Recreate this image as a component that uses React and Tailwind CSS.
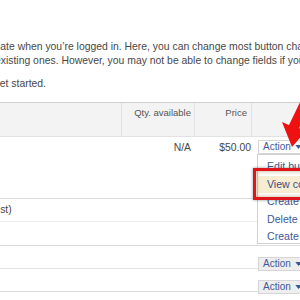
export default function App() {
  const font = { fontFamily: '"Liberation Sans", Arial, sans-serif' };
  const ActionBtn = ({ open }) => (
    <div
      className={`inline-flex items-center gap-[4px] h-[14px] pl-[4px] pr-[6px] border border-[#d6d6d6] text-[10px] leading-none text-[#3d5a98] whitespace-nowrap ${open ? "bg-white" : "bg-[#eeeeee]"}`}
    >
      Action
      <svg width="7" height="4" viewBox="0 0 8 5"><path d="M0 0h8L4 5z" fill="#3d5a98" /></svg>
    </div>
  );
  return (
    <div className="w-[300px] h-[300px] overflow-hidden bg-white relative text-[#474747]" style={font}>
      <div className="pt-[40px] text-[10.4px] leading-[14px] whitespace-nowrap">
        <div className="-ml-[17px]">update when you’re logged in. Here, you can change most button characteristics</div>
        <div className="-ml-[5px]">existing ones. However, you may not be able to change fields if you</div>
        <div className="-ml-[6px] mt-[9px]">get started.</div>
      </div>
      <div className="mt-[11px] border-t border-[#cfcfcf]">
        {/* header */}
        <div className="flex h-[34px] bg-[#f3f3f3] border-b border-[#e2e2e2] text-[9.5px] leading-[12px] text-[#555]">
          <div className="w-[122px] shrink-0 border-r border-[#e2e2e2]" />
          <div className="w-[73px] shrink-0 border-r border-[#e2e2e2] text-right pr-[3px] pt-[4px]">Qty. available</div>
          <div className="w-[57px] shrink-0 border-r border-[#e2e2e2] text-right pr-[4px] pt-[4px]">Price</div>
          <div className="flex-1 min-w-0" />
        </div>
        {/* row 1 */}
        <div className="flex h-[62px] border-b border-[#dcdcdc] text-[10.4px] leading-[12px]">
          <div className="w-[122px] shrink-0" />
          <div className="w-[73px] shrink-0 text-right pr-[4px] pt-[5px]">N/A</div>
          <div className="w-[57px] shrink-0 text-right pr-[1px] pt-[5px]">$50.00</div>
          <div className="flex-1 min-w-0 pl-[6px] pt-[3px]"><ActionBtn open /></div>
        </div>
        <div className="h-[23px] border-b border-[#ececec] text-[10.4px] leading-[12px] -ml-[12px] pt-[5px]">(test)</div>
        <div className="h-[24px] border-b border-[#dcdcdc]" />
        <div className="flex h-[23px] border-b border-[#e4e4e4]">
          <div className="w-[252px] shrink-0" />
          <div className="flex-1 min-w-0 pl-[6px] pt-[4px]"><ActionBtn /></div>
        </div>
        <div className="flex h-[23px] border-b border-[#dcdcdc]">
          <div className="w-[252px] shrink-0" />
          <div className="flex-1 min-w-0 pl-[6px] pt-[4px]"><ActionBtn /></div>
        </div>
      </div>

      {/* dropdown menu */}
      <div className="absolute left-[257px] top-[154px] w-[60px] h-[90px] bg-white border border-[#d0d0d0] text-[10.6px] text-[#3d5a98] whitespace-nowrap">
        <div className="pl-[9px] pt-[3px] leading-[17.5px]">
          <div>Edit button</div>
          <div className="-ml-[9px] pl-[9px] bg-[#f6edd3] text-[#3a4f80]">View code</div>
          <div>Create similar</div>
          <div>Delete button</div>
          <div>Create new</div>
        </div>
      </div>
      {/* red highlight box */}
      <div className="absolute left-[253px] top-[168px] w-[60px] h-[32px] border-[3px] border-[#e0141b] shadow-[inset_0_0_4px_rgba(120,80,0,0.5),0_0_3px_rgba(0,0,0,0.4)]" />
      {/* red arrow */}
      <svg className="absolute left-[278px] top-[100px]" width="30" height="50" viewBox="0 0 30 50">
        <path d="M26 -6 L38 -2 L21 28 L28 31 L14 47 L4 22 L11 25 Z" fill="#ee1111" />
      </svg>
    </div>
  );
}
